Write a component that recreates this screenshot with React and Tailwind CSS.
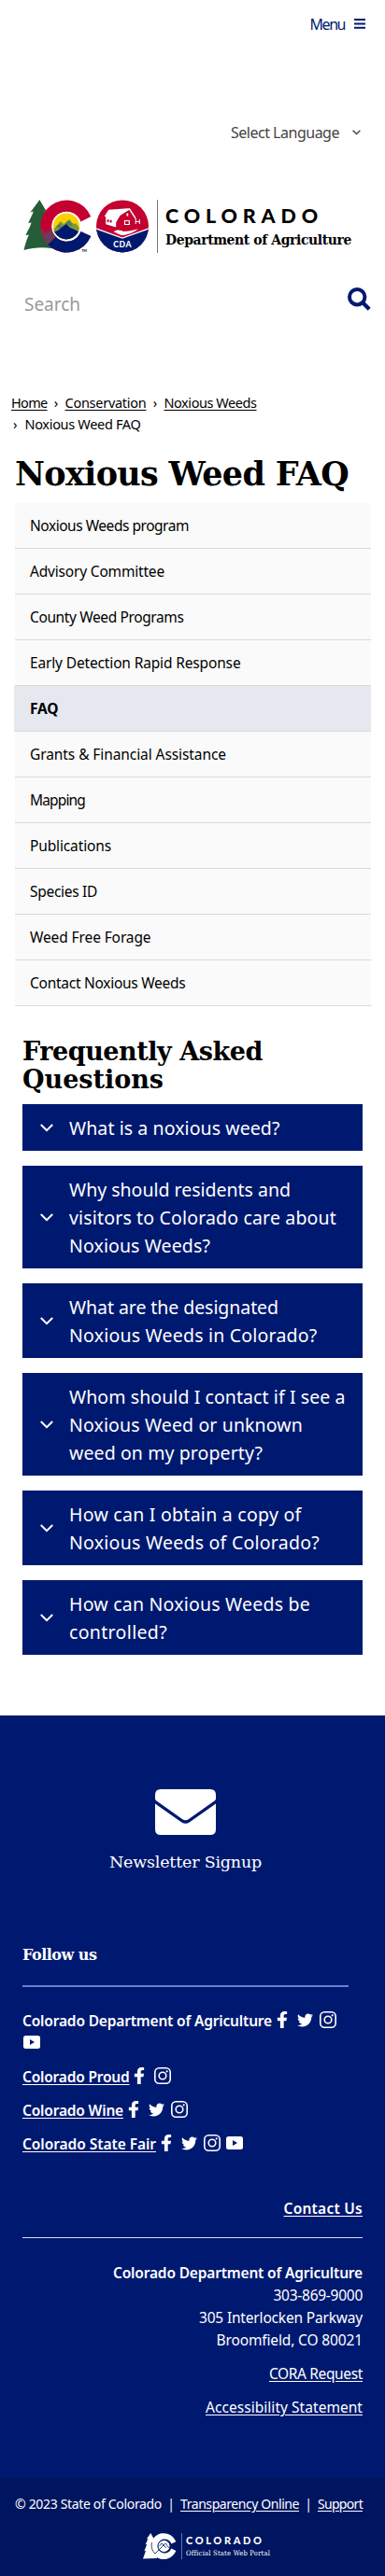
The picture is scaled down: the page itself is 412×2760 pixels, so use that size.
import React, { useLayoutEffect, useRef, useState } from "react";
import { FaFacebookF, FaTwitter } from "react-icons/fa";

const SANS = "font-['Noto_Sans','Open_Sans',sans-serif]";
const SLAB = "font-['DejaVu_Serif',serif]";
const SLAB_NARROW = "font-['DejaVu_Serif_Condensed','DejaVu_Serif',serif]";

/* Text set to a given measure by adjusting its letter spacing. */
function Fit({ w, className = "", children }) {
  const ref = useRef(null);
  const [spacing, setSpacing] = useState(0);
  useLayoutEffect(() => {
    const natural = ref.current.getBoundingClientRect().width;
    setSpacing((w - natural) / children.length);
  }, []);
  return (
    <span ref={ref} className={`whitespace-nowrap ${className}`} style={{ letterSpacing: `${spacing}px` }}>
      {children}
    </span>
  );
}

function Header() {
  return (
    <header>
      <div className="flex h-[51px] items-center justify-end gap-[10px] pr-[21px] text-[16px] text-[#001970]">
        <Fit w={37.5}>Menu</Fit>
        <svg width="12" height="11" viewBox="0 0 12 11" fill="#001970">
          <path d="M0 0h12v2H0zM0 4.4h12v2H0zM0 8.8h12v2H0z" />
        </svg>
      </div>
      <div className="mt-[75px] flex h-8 items-center justify-end gap-[14px] pr-[26px] text-[16px] text-[#444]">
        <Fit w={116}>Select Language</Fit>
        <svg width="9" height="6" viewBox="0 0 9 6" fill="none" stroke="#444" strokeWidth="1.4">
          <path d="M.6.7 4.5 4.6 8.4.7" />
        </svg>
      </div>
      <div className="mt-[56px] flex h-[57px] pl-[25px]">
        <svg width="134" height="57" viewBox="25 214 134 57" className="shrink-0">
          <defs>
            <clipPath id="sun"><circle cx="71" cy="242.4" r="14" /></clipPath>
            <clipPath id="cee">
              <path d="M97.2 232A28 28 0 1 0 97.2 253L86.5 248A16 16 0 1 1 86.5 237.5Z" />
            </clipPath>
            <clipPath id="seal"><circle cx="131" cy="242.4" r="28" /></clipPath>
          </defs>
          <path d="M42.3 214 50 227l-2.5-.4 6 11-3-.4 7 14 5 16.5C53 264.5 39 264 25.5 268c1.5-7 3-10.5 5.3-16.5l-3.4.5c2.6-5.6 4.7-8.2 6.2-13.5l-3.3.5c2.2-5 4.2-8.3 5.5-12.4l-3.4.8c4.2-5.4 7-8.9 9.900-13.400Z" fill="#245d38" />
          <g clipPath="url(#cee)">
            <path d="M42 213h58v58H42z" fill="#c3002f" />
            <path d="M43 243c5 6 9 10 14 13l-8 8h-7z" fill="#7a3350" />
            <path d="M51 261l8-13h42v24H58z" fill="#001970" />
            <path d="M47 252l9-7 5 8-10 9z" fill="#6d3a5d" />
          </g>
          <circle cx="71" cy="242.4" r="15.5" fill="#fff" />
          <g clipPath="url(#sun)">
            <path d="M56 227h30v31H56z" fill="#ffd100" />
            <path d="M56 247l9-10 3 3 6-5 5 5 2-1 6 8v12H56z" fill="#7a9a3c" />
            <path d="M60 243l4-3 4 6zM70 240l4-4 4 6z" fill="#4d7d63" />
            <path d="M56 249l6-2 6-5 3-2 4 4 5 2 7 4v10H56z" fill="#001970" />
          </g>
          <text x="87.5" y="269.5" fontSize="3.5" fontFamily="Lato, sans-serif" fontWeight="700">TM</text>
          <g clipPath="url(#seal)">
            <path d="M102 213h58v58h-58z" fill="#c3002f" />
            <path d="M102 244.5l29 10.5 29-10.5V272h-58z" fill="#001970" />
            <path d="M102 244.7l29 10.3 29-10.3" fill="none" stroke="#fff" strokeWidth="1.3" />
            <path d="M111.7 231.8l4.5-7 20.3-1.6 2.5.5-10.5 7.3-4.3 7.2v5.3l-11-3.3v-8z" fill="#fff" />
            <path d="M114.6 235.3h2v2.700h-2zm3 .5h2v2.700h-2z" fill="#c3002f" />
            <path d="M124 232.2l14.5-8.3 6.5 10" fill="none" stroke="#fff" strokeWidth="1.5" />
            <path d="M145.2 234v6M149.3 235v5M145 237.5h4.5" fill="none" stroke="#fff" strokeWidth="1" />
            <path d="M133.5 236.5h4.8v4h-4.8z" fill="none" stroke="#fff" strokeWidth="1.2" />
            <path d="M135.5 228.5h1.7v3h-1.7z" fill="#fff" />
            <path d="M121.5 248.2c4-3 8-1.5 11-.3 3.500-.2 10.500-1 15.500-2.700-4.500 3.500-10 6-17 7-3.500-1-6.500-2.500-9.500-4Z" fill="#fff" />
          </g>
          <text x="131.3" y="265.3" fontSize="8.6" fontFamily="Lato, sans-serif" fontWeight="900" textAnchor="middle" fill="#fff" letterSpacing=".7">CDA</text>
        </svg>
        <div className="ml-[9px] w-px bg-[#777]" />
        <div className="ml-[8px] flex flex-col pt-[5px] text-black">
          <div className="h-6 font-['Lato',sans-serif] text-[21.5px] leading-6 font-black">
            <Fit w={169}>COLORADO</Fit>
          </div>
          <div className={`mt-[2px] h-6 text-[15.5px] leading-6 font-bold ${SLAB_NARROW}`}>
            <Fit w={199}>Department of Agriculture</Fit>
          </div>
        </div>
      </div>
      <div className="mt-[33px] flex h-[44px] justify-between pr-[15px] pl-[26px]">
        <div className="pt-[8px] text-[19px] leading-7 text-[#999]"><Fit w={60}>Search</Fit></div>
        <svg width="25" height="25" viewBox="0 0 25 25" className="mt-[4px]" fill="none" stroke="#001970">
          <circle cx="10.2" cy="10.2" r="8.2" strokeWidth="4" />
          <path d="M16.2 16.2l7 7" strokeWidth="4.2" />
        </svg>
      </div>
    </header>
  );
}

function Crumb({ w, children }) {
  return <a href="#" className="underline underline-offset-2"><Fit w={w}>{children}</Fit></a>;
}

function Breadcrumbs() {
  return (
    <nav className="mt-[72px] pl-3 text-[14.5px] leading-[23px] text-black">
      <div className="flex">
        <Crumb w={38.5}>Home</Crumb>
        <span className="w-[19px] text-center">›</span>
        <Crumb w={87}>Conservation</Crumb>
        <span className="w-[19px] text-center">›</span>
        <Crumb w={99}>Noxious Weeds</Crumb>
      </div>
      <div className="flex">
        <span className="w-[14.5px] pl-[2px]">›</span>
        <Fit w={124}>Noxious Weed FAQ</Fit>
      </div>
    </nav>
  );
}

const MENU = [
  ["Noxious Weeds program", 170],
  ["Advisory Committee", 144],
  ["County Weed Programs", 164.5],
  ["Early Detection Rapid Response", 225.5],
  ["FAQ", 30.5],
  ["Grants & Financial Assistance", 210],
  ["Mapping", 59],
  ["Publications", 87],
  ["Species ID", 72],
  ["Weed Free Forage", 129.5],
  ["Contact Noxious Weeds", 166.5],
];

function SideMenu() {
  return (
    <ul className="mt-3 mr-[15px] ml-4">
      {MENU.map(([label, w]) => (
        <li
          key={label}
          className={`flex h-[49px] items-center border-b border-[#d9d9d9] pt-[2px] text-[15.5px] text-black ${
            label === "FAQ" ? "-ml-px bg-[#e5e8ef] pl-[17px] font-bold" : "bg-[#fafafa] pl-4"
          }`}
        >
          <Fit w={w}>{label}</Fit>
        </li>
      ))}
    </ul>
  );
}

const FAQS = [
  [["What is a noxious weed?", 225.5]],
  [["Why should residents and", 237], ["visitors to Colorado care about", 286], ["Noxious Weeds?", 151]],
  [["What are the designated", 224], ["Noxious Weeds in Colorado?", 265.5]],
  [["Whom should I contact if I see a", 295.5], ["Noxious Weed or unknown", 250], ["weed on my property?", 207]],
  [["How can I obtain a copy of", 248.5], ["Noxious Weeds of Colorado?", 268]],
  [["How can Noxious Weeds be", 258], ["controlled?", 105]],
];

function Faq() {
  return (
    <section className="mt-[34px] pr-6 pl-6">
      <h2 className={`flex flex-col text-[27px] leading-[30px] font-bold text-black ${SLAB}`}>
        <Fit w={257} className="self-start">Frequently Asked</Fit>
        <Fit w={151} className="self-start">Questions</Fit>
      </h2>
      <div className="mt-[11px] flex flex-col gap-4">
        {FAQS.map((lines) => (
          <button key={lines[0][0]} className="flex items-center bg-[#001970] pt-[11px] pb-[9px] pl-[19px] text-left text-white">
            <svg width="14" height="9" viewBox="0 0 14 9" fill="none" stroke="#fff" strokeWidth="2" className="mr-[17px] mb-[2px] shrink-0">
              <path d="M.8 1 7 7.2 13.2 1" />
            </svg>
            <span className="flex flex-col items-start text-[19.5px] leading-[30px]">
              {lines.map(([t, w]) => <Fit key={t} w={w}>{t}</Fit>)}
            </span>
          </button>
        ))}
      </div>
    </section>
  );
}

function Youtube() {
  return (
    <svg width="18" height="14" viewBox="0 0 18 14">
      <rect width="18" height="14" rx="2.5" fill="#fff" />
      <path d="M7 4v6l5-3z" fill="#001970" />
    </svg>
  );
}

function Facebook() {
  return <FaFacebookF className="h-[18px] w-[12px]" preserveAspectRatio="none" />;
}

function Socials({ kinds }) {
  return kinds.split("").map((k) => (
    <a key={k} href="#" className="mr-[4.6px] flex h-6 w-5 items-center justify-center">
      {k === "f" && <Facebook />}
      {k === "t" && <FaTwitter size={17} className="mt-px" />}
      {k === "i" && (
        <svg width="18" height="18" viewBox="0 0 18 18" fill="none" stroke="#fff" strokeWidth="1.6">
          <rect x=".8" y=".8" width="16.4" height="16.4" rx="4.5" />
          <circle cx="9" cy="9" r="3.8" />
          <circle cx="13.7" cy="4.3" r="1.1" fill="#fff" stroke="none" />
        </svg>
      )}
      {k === "y" && <Youtube />}
    </a>
  ));
}

function SocialRow({ label, w, kinds }) {
  return (
    <div className="mt-3 flex h-6 items-center">
      <a href="#" className="mr-[0.5px] pt-px leading-6 font-semibold underline underline-offset-2"><Fit w={w}>{label}</Fit></a>
      <Socials kinds={kinds} />
    </div>
  );
}

function Footer() {
  return (
    <footer className="mt-[65px] bg-[#001970] text-[15.5px] leading-6 text-white">
      <div className="flex flex-col items-center pt-[79px] pr-[15px]">
        <svg width="65" height="49" viewBox="0 0 65 49" fill="#fff">
          <path d="M6 0h53q6 0 6 6v4Q65 11.5 63.5 12.5L36 32q-3.500 2.500-7 0L1.500 12.500Q0 11.500 0 10V6Q0 0 6 0Z" />
          <path d="M0 15.500 28 35.300q4.500 3 9 0L65 15.500V43q0 6-6 6H6q-6 0-6-6Z" />
        </svg>
        <div className={`mt-[17px] text-[17.5px] ${SLAB}`}><Fit w={163}>Newsletter Signup</Fit></div>
      </div>
      <div className="px-6">
        <div className={`mt-[76px] text-[16px] font-bold ${SLAB}`}><Fit w={79.5}>Follow us</Fit></div>
        <div className="mt-[20px] mr-[15px] h-[2px] bg-[#6282cf]" />
        <div className="mt-[23px] flex h-6 items-center font-semibold">
          <Fit w={267} className="pt-px">Colorado Department of Agriculture</Fit>
          <span className="flex pl-[0.5px]"><Socials kinds="fti" /></span>
        </div>
        <div className="flex h-6 items-center"><Socials kinds="y" /></div>
        <SocialRow label="Colorado Proud" w={114.5} kinds="fi" />
        <SocialRow label="Colorado Wine" w={108} kinds="fti" />
        <SocialRow label="Colorado State Fair" w={143} kinds="ftiy" />
        <div className="mt-[46px] flex justify-end font-semibold">
          <a href="#" className="underline underline-offset-2"><Fit w={84.5}>Contact Us</Fit></a>
        </div>
        <div className="mt-[19px] h-px bg-[#d5dcf2]" />
        <div className="mt-[25px] flex flex-col items-end">
          <Fit w={267} className="font-semibold">Colorado Department of Agriculture</Fit>
          <Fit w={95.5}>303-869-9000</Fit>
          <Fit w={175}>305 Interlocken Parkway</Fit>
          <Fit w={156.5}>Broomfield, CO 80021</Fit>
          <a href="#" className="mt-3 underline underline-offset-2"><Fit w={100}>CORA Request</Fit></a>
          <a href="#" className="mt-3 underline underline-offset-2"><Fit w={168}>Accessibility Statement</Fit></a>
        </div>
      </div>
      <div className="mt-[64px] flex h-[105px] flex-col bg-[#001560] pt-[16px]">
        <div className="flex pl-4 text-[14px]">
          <Fit w={157}>© 2023 State of Colorado</Fit>
          <span className="w-[20px] text-center">|</span>
          <a href="#" className="underline underline-offset-2"><Fit w={127}>Transparency Online</Fit></a>
          <span className="w-[20px] text-center">|</span>
          <a href="#" className="underline underline-offset-2"><Fit w={48}>Support</Fit></a>
        </div>
        <div className="mt-[19px] flex h-7 pl-[153px]">
          <svg width="36" height="28" viewBox="0 0 36 28">
            <path d="M8.3 0 12 7l-1 1 4 8v11L0 27.5 3 19l-1.6.3L4.2 12l-1.5.2L5.4 6l-1.5.2Z" fill="#fff" />
            <path d="M35.3 9.300A14 14 0 1 0 35.300 19l-5-2.500a7.500 7.500 0 1 1 0-5Z" fill="#fff" />
            <circle cx="22.5" cy="14" r="6.5" fill="#fff" stroke="#001560" strokeWidth=".9" />
            <path d="M9.5 10c-1 4 0 9 3.500 12l11-11 4 5M17.500 14l2.500-3 5 5" fill="none" stroke="#001560" strokeWidth=".8" />
          </svg>
          <div className="ml-[5px] w-px bg-[#6474a8]" />
          <div className="ml-[4px] flex flex-col">
            <div className="h-4 font-['Lato',sans-serif] text-[11px] leading-4 font-black"><Fit w={83.5}>COLORADO</Fit></div>
            <div className={`h-3 text-[7.5px] leading-[11px] ${SLAB_NARROW}`}><Fit w={90}>Official State Web Portal</Fit></div>
          </div>
        </div>
      </div>
    </footer>
  );
}

export default function App() {
  return (
    <div className={`w-[412px] bg-white ${SANS}`}>
      <Header />
      <Breadcrumbs />
      <h1 className={`mt-[23px] h-[38px] pl-4 text-[35px] leading-[38px] font-bold text-black ${SLAB}`}>
        <Fit w={357}>Noxious Weed FAQ</Fit>
      </h1>
      <SideMenu />
      <Faq />
      <Footer />
    </div>
  );
}
